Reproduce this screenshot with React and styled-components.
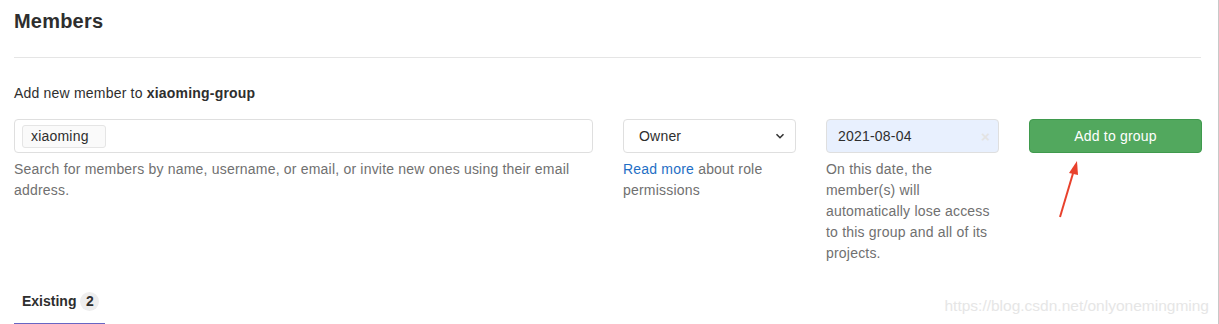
import React from "react";
import styled, { createGlobalStyle } from "styled-components";

const GlobalStyle = createGlobalStyle`
  body {
    margin: 0;
    background: #fff;
    font-family: "Liberation Sans", Arial, sans-serif;
    color: #2e2e2e;
  }
`;

const Page = styled.div`
  position: relative;
  width: 1219px;
  height: 324px;
  overflow: hidden;
  box-sizing: border-box;
  padding: 0 17px 0 14px;
  border-right: 1px solid #c8c8c8;
`;

const Title = styled.h3`
  margin: 0;
  padding-top: 9px;
  height: 58px;
  box-sizing: border-box;
  font-size: 20px;
  font-weight: 700;
  line-height: 24px;
  letter-spacing: 0.2px;
  color: #2e2e2e;
  border-bottom: 1px solid #e5e5e5;
`;

const Lead = styled.p`
  margin: 26px 0 0;
  font-size: 14px;
  line-height: 18px;
  letter-spacing: 0.2px;
  color: #2e2e2e;

  b {
    font-weight: 700;
  }
`;

const FormRow = styled.div`
  display: grid;
  grid-template-columns: 579px 173px 173px 173px;
  column-gap: 30px;
  margin-top: 17px;
`;

const Field = styled.div`
  display: flex;
  flex-direction: column;
`;

const Box = styled.div`
  height: 34px;
  box-sizing: border-box;
  border: 1px solid #dfdfdf;
  border-radius: 4px;
  background: ${({ $fill }) => $fill || "#fff"};
  display: flex;
  align-items: center;
  padding: ${({ $pad }) => $pad || "0 7px"};
  font-size: 14px;
  letter-spacing: 0.2px;
  color: #2e2e2e;
`;

const Token = styled.span`
  display: inline-flex;
  align-items: center;
  height: 23px;
  width: 84px;
  padding: 0 8px;
  box-sizing: border-box;
  background: #fafafa;
  border: 1px solid #e5e5e5;
  border-radius: 3px;
  font-size: 14px;
`;

const Chevron = styled.svg`
  margin-left: auto;
  width: 10px;
  height: 10px;
`;

const Clear = styled.span`
  margin-left: auto;
  color: #e3e3e3;
  font-size: 15px;
  font-weight: 700;
`;

const Help = styled.p`
  margin: 6px 0 0;
  font-size: 14px;
  line-height: 21px;
  letter-spacing: 0.2px;
  color: #707070;

  a {
    color: #1f6fc5;
    text-decoration: none;
  }
`;

const Button = styled.button`
  height: 34px;
  border: 1px solid #3f9a4d;
  border-radius: 4px;
  background: #52a85e;
  color: #fff;
  font-family: inherit;
  font-size: 14px;
  letter-spacing: 0.2px;
  cursor: pointer;
`;

const Tabs = styled.div`
  margin-top: 24px;
  display: flex;
`;

const Tab = styled.div`
  display: flex;
  align-items: center;
  gap: 4px;
  width: 83px;
  height: 26px;
  padding: 0 0 9px 8px;
  border-bottom: 2px solid #6666c4;
  font-size: 14px;
  font-weight: 700;
  color: #2e2e2e;
`;

const Badge = styled.span`
  display: inline-flex;
  align-items: center;
  justify-content: center;
  width: 19px;
  height: 19px;
  border-radius: 50%;
  background: #eee;
  font-size: 14px;
  font-weight: 700;
`;

const Watermark = styled.div`
  position: absolute;
  right: 9px;
  bottom: 9px;
  font-size: 15.5px;
  color: #e6e6e6;
`;

const Arrow = styled.svg`
  position: absolute;
  left: 1055px;
  top: 156px;
`;

export default function App() {
  return (
    <>
      <GlobalStyle />
      <Page>
        <Title>Members</Title>
        <Lead>
          Add new member to <b>xiaoming-group</b>
        </Lead>
        <FormRow>
          <Field>
            <Box>
              <Token>xiaoming</Token>
            </Box>
            <Help>
              Search for members by name, username, or email, or invite new
              ones using their email address.
            </Help>
          </Field>
          <Field>
            <Box $pad="0 10px 0 15px">
              Owner
              <Chevron viewBox="0 0 10 10">
                <path
                  d="M1.5 3.2 L5 6.7 L8.5 3.2"
                  fill="none"
                  stroke="#333"
                  strokeWidth="1.6"
                />
              </Chevron>
            </Box>
            <Help>
              <a href="#">Read more</a> about role permissions
            </Help>
          </Field>
          <Field>
            <Box $fill="#e8f0fe" $pad="0 8px 0 11px">
              2021-08-04
              <Clear>×</Clear>
            </Box>
            <Help>
              On this date, the member(s) will automatically lose access to
              this group and all of its projects.
            </Help>
          </Field>
          <Field>
            <Button>Add to group</Button>
          </Field>
        </FormRow>
        <Tabs>
          <Tab>
            Existing <Badge>2</Badge>
          </Tab>
        </Tabs>
        <Watermark>https://blog.csdn.net/onlyonemingming</Watermark>
        <Arrow width="30" height="66" viewBox="0 0 30 66">
          <path d="M5 61 L19 14" stroke="#e8412c" strokeWidth="2" />
          <path d="M22 5 L14 17 L23 19 Z" fill="#e8412c" />
        </Arrow>
      </Page>
    </>
  );
}
